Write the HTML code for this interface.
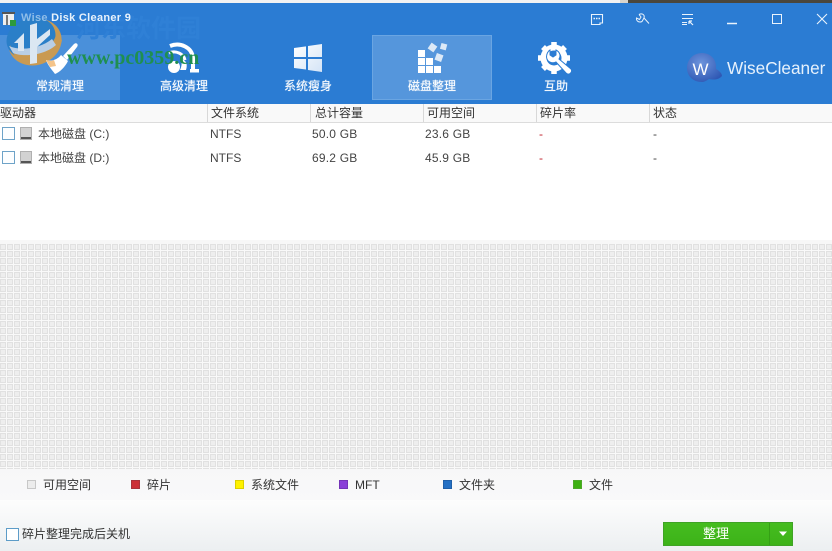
<!DOCTYPE html>
<html><head><meta charset="utf-8">
<style>
html,body{margin:0;padding:0;background:#fff}
#p{position:relative;width:832px;height:551px;overflow:hidden;background:#fff;font-family:"Liberation Sans","Noto Sans CJK SC",sans-serif;font-size:12px;color:#333}
.a{position:absolute;white-space:nowrap}
.nav{position:absolute;top:35px;width:120px;height:65px}
.nl{position:absolute;top:78px;color:#fff;font-size:12px;line-height:16px;width:120px;text-align:center;white-space:nowrap;text-shadow:0 0 1px rgba(255,255,255,.6)}
.h{position:absolute;top:104px;height:18px;line-height:18px;color:#333;font-size:12px;white-space:nowrap}
.sep{position:absolute;top:104px;width:1px;height:18px;background:#d8d8d8}
.c{position:absolute;height:16px;line-height:16px;font-size:12px;color:#444;white-space:nowrap}
.n{letter-spacing:.2px}
.cb{position:absolute;width:11px;height:11px;border:1px solid #6ea3c8;background:#fdfeff}
.sw{position:absolute;top:480px;width:7px;height:7px;border-width:1px;border-style:solid}
.lg{position:absolute;top:477px;line-height:16px;font-size:12px;color:#333;white-space:nowrap}
svg{position:absolute;overflow:visible}
</style></head><body><div id="p">
<div class="a" style="left:0;top:0;width:832px;height:3px;background:#f2f2f2"></div>
<div class="a" style="left:620px;top:0;width:8px;height:3px;background:#d8d4cc"></div>
<div class="a" style="left:628px;top:0;width:204px;height:3px;background:#4a463c"></div>
<div class="a" style="left:0;top:3px;width:832px;height:101px;background:#2b7cd3"></div>
<div class="nav" style="left:0;background:#4a90da"></div>
<div class="nav" style="left:372px;background:#5596dc;outline:1px solid #6aa5e2;outline-offset:-1px"></div>

<div class="a" style="left:76px;top:11px;font-size:25px;line-height:36px;color:#2f80d6;font-family:'Liberation Sans','Noto Sans CJK SC',sans-serif;font-weight:bold">河东软件园</div>

<!-- watermark logo -->
<svg style="left:0;top:5px" width="70" height="70" viewBox="0 0 70 70">
<ellipse cx="35" cy="37" rx="27" ry="23" transform="rotate(-20 35 37)" fill="#c99a52"/>
<ellipse cx="31" cy="33" rx="25" ry="20" transform="rotate(-20 31 33)" fill="#2a7fc8"/>
<path d="M10 40 C14 48 24 50 36 47 C46 44 54 38 56 30 L62 35 C60 46 48 58 34 59 C22 60 13 52 10 40Z" fill="#c99a52"/>
<path d="M9 41 C20 46 40 44 52 34 L56 40 C44 51 22 52 13 48Z" fill="#b9cfe6"/>
<path d="M14 38 L24 28 L24 46 L18 46 L18 38Z" fill="#dbe7f2"/>
<path d="M30 20 L37 18 L37 58 L30 59Z" fill="#dbe7f2"/>
<path d="M37 34 L50 24 L50 30 L37 42Z" fill="#dbe7f2"/>
</svg>

<!-- app icon -->
<svg style="left:0;top:0" width="20" height="30"><rect x="3" y="13" width="11" height="12" fill="#eee"/><rect x="2" y="12" width="13" height="2" fill="#555"/><rect x="6" y="15" width="2" height="10" fill="#777"/><rect x="10" y="20" width="6" height="6" fill="#2d9a3c"/></svg>
<div class="a" style="left:21px;top:10px;font-size:11px;font-weight:bold;color:#e8f2fc;line-height:16px;letter-spacing:.3px"><span style="color:#8fbde8">Wise</span> Disk Cleaner 9</div>

<!-- broom -->
<svg style="left:44px;top:42px" width="36" height="34" viewBox="0 0 36 34">
<path d="M19 14 L30 2 C32 0 35 2 33 5 L23 18Z" fill="#fff"/>
<path d="M2 18 C8 20 14 17 17 13 L24 19 C21 25 16 30 11 32 C9 29 4 24 2 18Z" fill="#fff"/>
<path d="M2 18 C5 19 8 19 10 18 L12 24 L6 25Z" fill="#f4c48a"/>
</svg>
<!-- vacuum -->
<svg style="left:166px;top:42px" width="36" height="34" viewBox="0 0 36 34">
<path d="M4 4 C14 0 26 5 27 16 L27 28" fill="none" stroke="#fff" stroke-width="4"/>
<path d="M3 11 C10 8 18 12 19 18" fill="none" stroke="#fff" stroke-width="3"/>
<circle cx="8" cy="25" r="6" fill="#fff"/>
<path d="M15 17 C20 18 22 22 20 28 L14 28 C16 24 16 20 15 17Z" fill="#fff"/>
<rect x="24" y="27" width="9" height="3.5" fill="#fff"/>
</svg>
<div class="a" style="left:67px;top:48px;font-family:'Liberation Serif',serif;font-weight:bold;font-size:20px;line-height:20px;color:#1f8f50">www.pc0359.cn</div>

<!-- windows -->
<svg style="left:293px;top:43px" width="30" height="30" viewBox="0 0 30 30">
<defs><linearGradient id="w" x1="0" x2="1" y1="0" y2="1"><stop offset="0" stop-color="#fff"/><stop offset="1" stop-color="#d4e4f6"/></linearGradient></defs>
<path d="M1 5 L13 3.400 L13 14 L1 14Z M15 3 L29 1 L29 14 L15 14Z M1 16 L13 16 L13 26.500 L1 25Z M15 16 L29 16 L29 29 L15 27Z" fill="url(#w)"/>
</svg>
<!-- defrag -->
<svg style="left:417px;top:43px" width="30" height="30" viewBox="0 0 30 30">
<g fill="#fff"><rect x="1" y="7" width="7" height="7"/><rect x="1" y="15" width="7" height="7"/><rect x="9" y="15" width="7" height="7"/><rect x="1" y="23" width="7" height="7"/><rect x="9" y="23" width="7" height="7"/><rect x="17" y="23" width="7" height="7"/></g>
<g fill="#dce9f7"><rect x="12" y="1" width="7" height="7" transform="rotate(35 15.500 4.500)"/><rect x="23.500" y="0.500" width="6" height="6" transform="rotate(15 26 4)"/><rect x="18.500" y="11" width="7" height="7" transform="rotate(20 22 14.500)"/></g>
</svg>
<!-- gear wrench -->
<svg style="left:538px;top:41px" width="36" height="36" viewBox="0 0 36 36">
<circle cx="16" cy="17" r="10.500" fill="none" stroke="#fff" stroke-width="6"/>
<g stroke="#fff" stroke-width="5.500"><path d="M16 1V6M16 28V33M0 17H5M27 17H32M5 6L8.500 9.500M27 6L23.500 9.500M5 28L8.500 24.500"/></g>
<path d="M12 9 L12 14 L15 16 L18 14 L18 9 C22 11 23 15 21 18 L33 28 C35 31 31 35 28 32 L18 21 C14 23 9 21 8.500 16 C8.500 13 10 10 12 9Z" fill="#fff" stroke="#2b7cd3" stroke-width="1"/>
</svg>

<div class="nl" style="left:0">常规清理</div>
<div class="nl" style="left:124px">高级清理</div>
<div class="nl" style="left:248px">系统瘦身</div>
<div class="nl" style="left:372px">磁盘整理</div>
<div class="nl" style="left:496px">互助</div>

<!-- window controls -->
<svg style="left:590px;top:12px" width="240" height="16" viewBox="0 0 240 16" fill="none" stroke="#eaf3fc" stroke-width="1">
<path d="M1.500 2.500H12.500V11H10V12.500H1.500Z" stroke-width="1.100"/><path d="M3.500 6.500H5.500M6 6.500H8M8.500 6.500H10.500" stroke-width="1.600" stroke-dasharray="1.500 .8"/>
<path d="M49 2.500 C52 1 55 2.500 54 6 L59 11.500 M49 2.500 L51 5 L49.500 7.500 L46.500 6 C46 9 49 11 52 9.500 L54 6"/>
<path d="M92 2.500H103M92 6.500H103M92 10.500H97M92 12.500H97" stroke-width="1.100"/><path d="M99 9L103 13M99 9V12M99 9H102" stroke-width="1.200"/>
<path d="M137 11.500H147" stroke-width="1.500"/>
<rect x="182.500" y="2.500" width="9" height="9"/>
<path d="M227 2L237 12M237 2L227 12" stroke-width="1.100"/>
</svg>

<!-- WiseCleaner logo -->
<svg style="left:686px;top:52px" width="36" height="32" viewBox="0 0 36 32">
<defs><radialGradient id="b" cx=".4" cy=".35" r=".7"><stop offset="0" stop-color="#6d94dc"/><stop offset="1" stop-color="#2f58b4"/></radialGradient></defs>
<path d="M16 1 C25 1 31 8 30 17 C34 19 36 22 36 24 C33 28 27 28 23 27 C20 29 18 30 16 30 C7 30 1 24 1 16 C1 8 7 1 16 1Z" fill="url(#b)"/>
<text x="6.500" y="23" font-family="Liberation Sans,sans-serif" font-size="17" fill="#fff">W</text>
</svg>
<div class="a" style="left:727px;top:57px;font-size:17.200px;line-height:22px;color:#e6f1fc">WiseCleaner</div>

<!-- header -->
<div class="a" style="left:0;top:104px;width:832px;height:18px;background:#f9f9f9"></div>
<div class="a" style="left:0;top:122px;width:832px;height:1px;background:#dcdcdc"></div>
<div class="h" style="left:0">驱动器</div>
<div class="sep" style="left:207px"></div><div class="h" style="left:211px">文件系统</div>
<div class="sep" style="left:310px"></div><div class="h" style="left:315px">总计容量</div>
<div class="sep" style="left:423px"></div><div class="h" style="left:427px">可用空间</div>
<div class="sep" style="left:536px"></div><div class="h" style="left:540px">碎片率</div>
<div class="sep" style="left:649px"></div><div class="h" style="left:653px">状态</div>

<!-- rows -->
<div class="cb" style="left:2px;top:127px"></div>
<div class="cb" style="left:2px;top:151px"></div>
<svg style="left:20px;top:127px" width="13" height="13"><rect x=".5" y=".5" width="11" height="12" fill="#d2d2d2" stroke="#b0b0b0"/><rect x="1" y="10" width="10" height="2" fill="#555"/></svg>
<svg style="left:20px;top:151px" width="13" height="13"><rect x=".5" y=".5" width="11" height="12" fill="#d2d2d2" stroke="#b0b0b0"/><rect x="1" y="10" width="10" height="2" fill="#555"/></svg>
<div class="c" style="left:38px;top:126px">本地磁盘 (C:)</div>
<div class="c" style="left:38px;top:150px">本地磁盘 (D:)</div>
<div class="c" style="left:210px;top:126px">NTFS</div>
<div class="c" style="left:210px;top:150px">NTFS</div>
<div class="c n" style="left:312px;top:126px">50.0 GB</div>
<div class="c n" style="left:312px;top:150px">69.2 GB</div>
<div class="c n" style="left:425px;top:126px">23.6 GB</div>
<div class="c n" style="left:425px;top:150px">45.9 GB</div>
<div class="c" style="left:539px;top:126px;color:#c0202a">-</div>
<div class="c" style="left:539px;top:150px;color:#c0202a">-</div>
<div class="c" style="left:653px;top:126px">-</div>
<div class="c" style="left:653px;top:150px">-</div>

<!-- grid -->
<div class="a" style="left:0;top:240px;width:832px;height:231px;background:#f7f7f7"></div>
<svg style="left:0;top:244px" width="832" height="225">
<defs><pattern id="g" width="7" height="7" patternUnits="userSpaceOnUse"><rect width="7" height="7" fill="#f9f9f9"/><rect x="0.500" y="0.500" width="5" height="5" fill="#eeeeee" stroke="#e1e1e1"/></pattern></defs>
<rect width="832" height="225" fill="url(#g)"/>
</svg>

<!-- legend -->
<div class="a" style="left:0;top:469px;width:832px;height:31px;background:linear-gradient(#f7f7f8,#f9f9fa)"></div>
<div class="a" style="left:0;top:500px;width:832px;height:51px;background:linear-gradient(#fdfdfd,#eceff1)"></div>
<div class="sw" style="left:27px;background:#ececec;border-color:#c8c8c8"></div><div class="lg" style="left:43px">可用空间</div>
<div class="sw" style="left:131px;background:#cc2f36;border-color:#a8323a"></div><div class="lg" style="left:147px">碎片</div>
<div class="sw" style="left:235px;background:#fff200;border-color:#dcd000"></div><div class="lg" style="left:251px">系统文件</div>
<div class="sw" style="left:339px;background:#8a3fd8;border-color:#7434b8"></div><div class="lg" style="left:355px">MFT</div>
<div class="sw" style="left:443px;background:#2470c4;border-color:#1f5fa8"></div><div class="lg" style="left:459px">文件夹</div>
<div class="sw" style="left:573px;background:#3db012;border-color:#4ea82a"></div><div class="lg" style="left:589px">文件</div>

<!-- bottom -->
<div class="cb" style="left:6px;top:528px;border-color:#5d9cc8;background:#fff"></div>
<div class="a" style="left:22px;top:526px;font-size:12px;line-height:16px;color:#333">碎片整理完成后关机</div>
<div class="a" style="left:663px;top:522px;width:130px;height:24px;background:linear-gradient(#46bd20,#3cb218);box-shadow:inset 0 0 0 1px #3fa325"></div>
<div class="a" style="left:769px;top:523px;width:1px;height:22px;background:#35a015"></div>
<div class="a" style="left:663px;top:525px;width:106px;text-align:center;color:#fff;font-size:13px;line-height:18px">整理</div>
<svg style="left:778px;top:531px" width="10" height="6"><path d="M1 .5H9L5 5Z" fill="#fff"/></svg>
</div></body></html>
